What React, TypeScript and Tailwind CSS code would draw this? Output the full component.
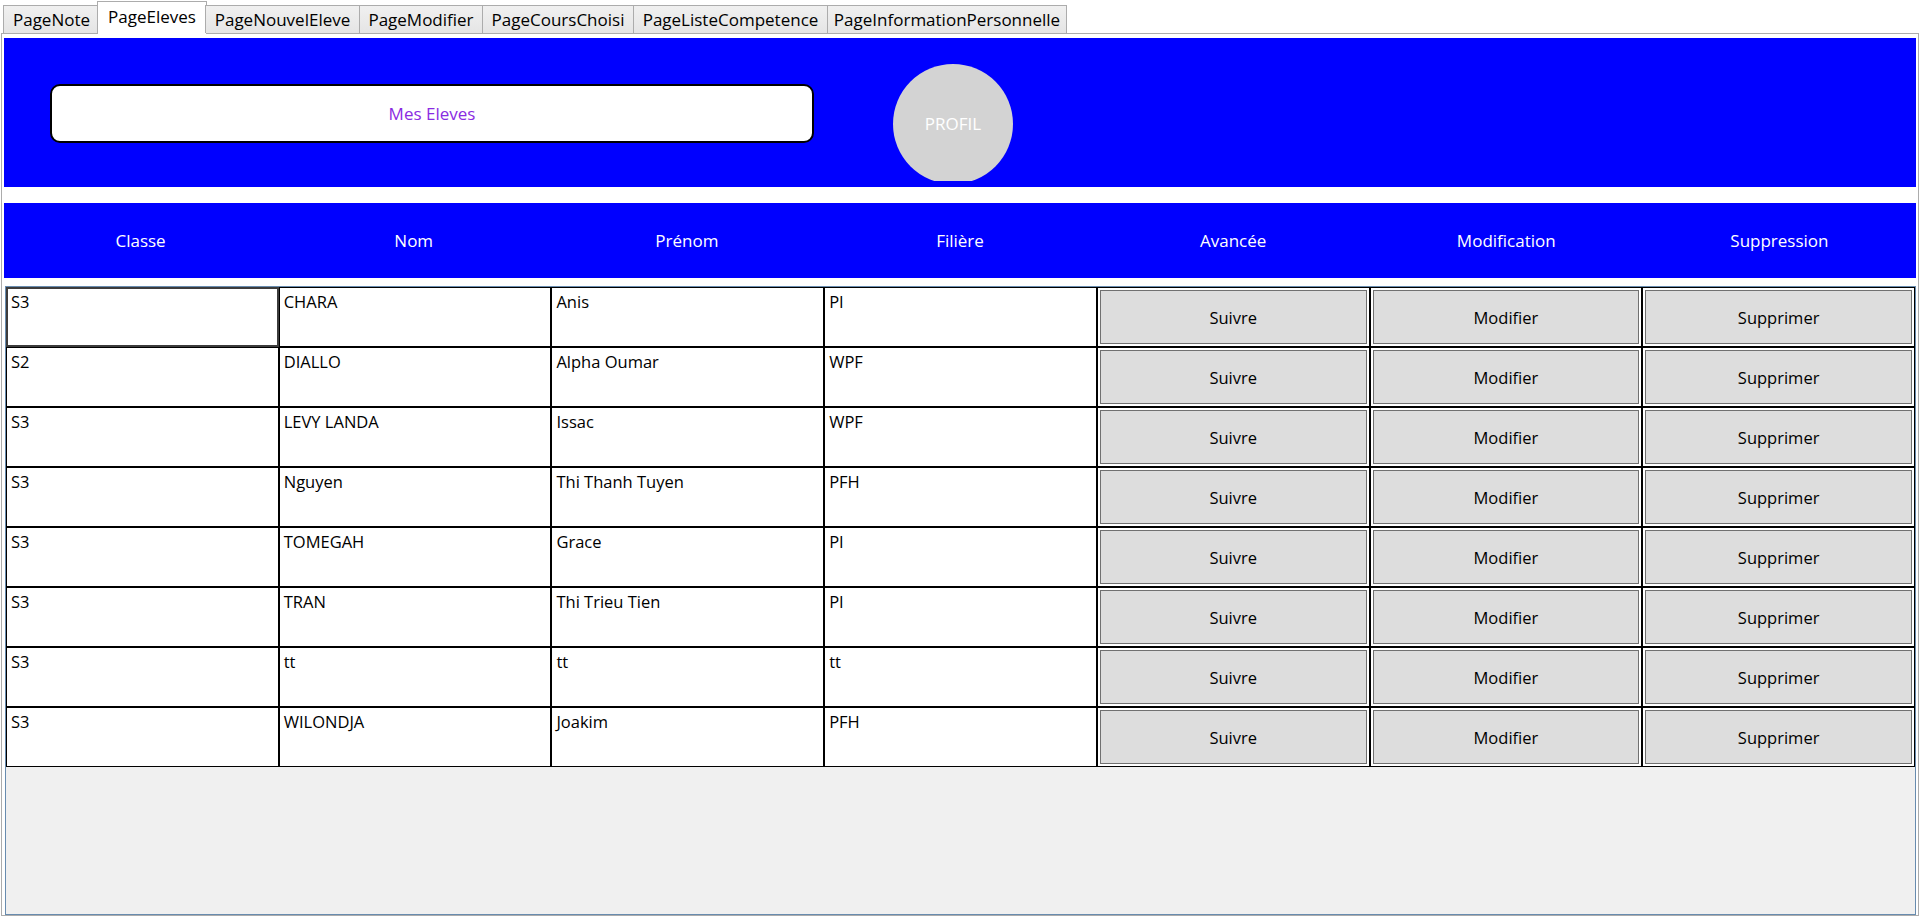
import React from 'react';

interface IEleve {
  classe: string;
  nom: string;
  prenom: string;
  filiere: string;
}

const tabs = [
  { label: 'PageNote', w: 'w-[97px]' },
  { label: 'PageEleves', w: 'w-[110px]', active: true },
  { label: 'PageNouvelEleve', w: 'w-[155px]' },
  { label: 'PageModifier', w: 'w-[124px]' },
  { label: 'PageCoursChoisi', w: 'w-[152px]' },
  { label: 'PageListeCompetence', w: 'w-[195px]' },
  { label: 'PageInformationPersonnelle', w: 'w-[240px]' },
];

const headers = ['Classe', 'Nom', 'Prénom', 'Filière', 'Avancée', 'Modification', 'Suppression'];

const eleves: IEleve[] = [
  { classe: 'S3', nom: 'CHARA', prenom: 'Anis', filiere: 'PI' },
  { classe: 'S2', nom: 'DIALLO', prenom: 'Alpha Oumar', filiere: 'WPF' },
  { classe: 'S3', nom: 'LEVY LANDA', prenom: 'Issac', filiere: 'WPF' },
  { classe: 'S3', nom: 'Nguyen', prenom: 'Thi Thanh Tuyen', filiere: 'PFH' },
  { classe: 'S3', nom: 'TOMEGAH', prenom: 'Grace', filiere: 'PI' },
  { classe: 'S3', nom: 'TRAN', prenom: 'Thi Trieu Tien', filiere: 'PI' },
  { classe: 'S3', nom: 'tt', prenom: 'tt', filiere: 'tt' },
  { classe: 'S3', nom: 'WILONDJA', prenom: 'Joakim', filiere: 'PFH' },
];

const TextCell = ({ text, focused }: { text: string; focused?: boolean }) => (
  <div
    className={
      focused
        ? 'h-[60px] border-2 border-[#3c3c3c] bg-white px-[3px] pt-[2px] leading-[22px]'
        : 'h-[60px] border border-black bg-white px-[4px] pt-[3px] leading-[22px]'
    }
  >
    {text}
  </div>
);

const ButtonCell = ({ label }: { label: string }) => (
  <div className='h-[60px] border border-black bg-white p-[2px]'>
    <button className='flex h-full w-full items-center justify-center border border-[#707070] bg-[#dddddd] pt-[2px]'>
      {label}
    </button>
  </div>
);

export default function App() {
  return (
    <div className="h-[916px] w-[1920px] overflow-hidden bg-white text-[16.5px] text-black font-['Open_Sans',sans-serif]">
      {/* Tabs */}
      <div className='relative z-10 flex h-[33px] items-end pl-[3px] text-[17px]'>
        {tabs.map((t) =>
          t.active ? (
            <div
              key={t.label}
              className={`${t.w} -mx-[2px] -mb-px flex h-[33px] items-center justify-center border border-b-0 border-[#acacac] bg-white pb-[2px]`}
            >
              {t.label}
            </div>
          ) : (
            <div
              key={t.label}
              className={`${t.w} -mr-px flex h-[28px] items-center justify-center border border-b-0 border-[#acacac] bg-gradient-to-b from-[#f0f0f0] to-[#e5e5e5] pt-[1px]`}
            >
              {t.label}
            </div>
          )
        )}
      </div>

      {/* Page content */}
      <div className='mx-px flex h-[883px] flex-col border border-[#acacac] px-[2px] pt-[4px]'>
        {/* Top bar */}
        <div className='flex h-[149px] shrink-0 items-start bg-[#0000ff]'>
          <div className='ml-[46px] mt-[46px] flex h-[59px] w-[764px] items-center justify-center rounded-[10px] border-2 border-black bg-white text-[17px] text-[#8a2be2]'>
            Mes Eleves
          </div>
          <div className='ml-[79px] mt-[26px] h-[117px] w-[120px] overflow-hidden'>
            <div className='flex h-[120px] w-[120px] items-center justify-center rounded-full bg-[#d3d3d3] text-[17px] text-white'>
              PROFIL
            </div>
          </div>
        </div>

        {/* Column headers */}
        <div className='mt-[16px] grid h-[75px] shrink-0 grid-cols-7 items-center bg-[#0000ff] text-[17px] text-white'>
          {headers.map((h) => (
            <div key={h} className='text-center'>
              {h}
            </div>
          ))}
        </div>

        {/* Data grid */}
        <div className='ml-px mt-[8px] flex-1 border border-[#688caf] bg-[#f0f0f0]'>
          {eleves.map((e, i) => (
            <div key={i} className='grid grid-cols-7'>
              <TextCell text={e.classe} focused={i === 0} />
              <TextCell text={e.nom} />
              <TextCell text={e.prenom} />
              <TextCell text={e.filiere} />
              <ButtonCell label='Suivre' />
              <ButtonCell label='Modifier' />
              <ButtonCell label='Supprimer' />
            </div>
          ))}
        </div>
      </div>
    </div>
  );
}
